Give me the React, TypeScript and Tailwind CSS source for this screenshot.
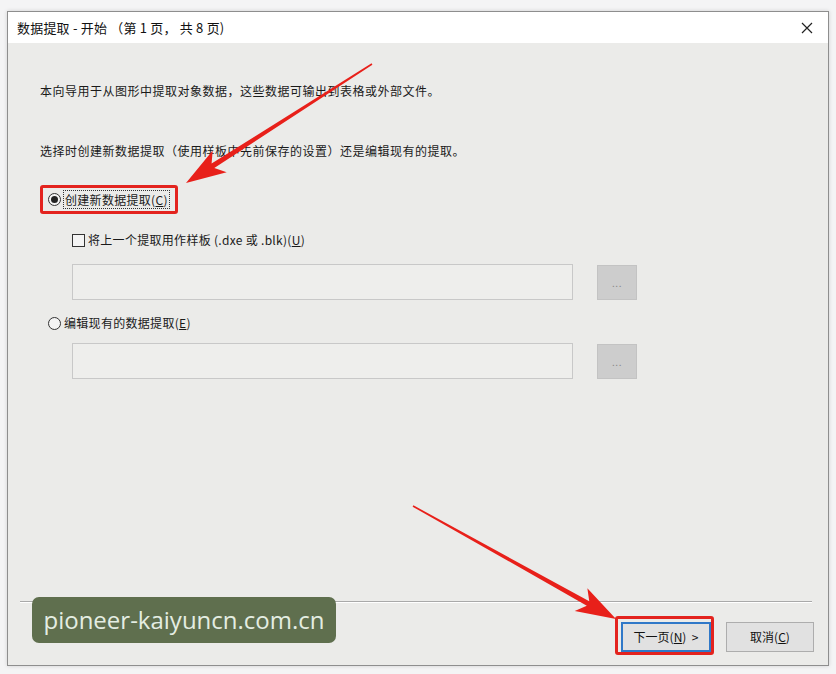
import React from "react";

const cjk = { fontFamily: '"Noto Sans CJK SC", "Microsoft YaHei", sans-serif' };

function Radio({ checked }: { checked?: boolean }) {
  return (
    <span className="w-[13px] h-[13px] rounded-full border border-[#333] bg-[#f4f4f4] flex items-center justify-center shrink-0">
      {checked && <span className="w-[7px] h-[7px] rounded-full bg-[#222]" />}
    </span>
  );
}

function PathRow() {
  return (
    <div className="flex items-start ml-[32px]">
      <div className="w-[501px] h-[36px] border border-[#c8c8c8] bg-[#eeeeec]" />
      <div className="ml-[24px] mt-[1px] w-[40px] h-[35px] bg-[#cdcdcd] border border-[#c3c3c3] flex items-center justify-center text-[10px] text-[#888] leading-none">
        ...
      </div>
    </div>
  );
}

export default function App() {
  return (
    <div className="relative w-[836px] h-[674px] bg-[#f4f4f5] overflow-hidden" style={cjk}>
      <div className="pt-[11px] pl-[7px]">
        <div className="w-[822px] h-[655px] border border-[#8e8e8e] bg-[#ebebe9] flex flex-col shadow-[0_0_4px_rgba(0,0,0,0.15)]">
          {/* Title bar */}
          <div className="h-[31px] bg-white flex items-center justify-between pl-[9px] pr-[10px] shrink-0">
            <span className="text-[13px] text-[#111] tracking-[0.2px]">数据提取 - 开始 （第 1 页， 共 8 页)</span>
            <svg width="12" height="12" viewBox="0 0 12 12" className="mr-[5px]">
              <path d="M1 1 L11 11 M11 1 L1 11" stroke="#222" strokeWidth="1.2" fill="none" />
            </svg>
          </div>

          {/* Content */}
          <div className="flex-1 flex flex-col pl-[32px] text-[12px] leading-[16px] text-[#1a1a1a] tracking-[0.5px]">
            <p className="mt-[40px]">本向导用于从图形中提取对象数据，这些数据可输出到表格或外部文件。</p>
            <p className="mt-[44px]">选择时创建新数据提取（使用样板中先前保存的设置）还是编辑现有的提取。</p>

            <div className="mt-[26px] self-start h-[29px] w-[138px] border-[3px] border-[#e3231e] rounded-[3px] flex items-center pl-[5px] tracking-[0.3px]">
              <Radio checked />
              <span className="ml-[2px] border border-dotted border-[#333] px-[1px] leading-[17px]">
                创建新数据提取(<u>C</u>)
              </span>
            </div>

            <div className="mt-[18px] ml-[32px] flex items-center h-[16px]">
              <span className="w-[13px] h-[13px] border border-[#333] bg-[#f4f4f4] shrink-0" />
              <span className="ml-[3px] tracking-[0.3px]">将上一个提取用作样板 (.dxe 或 .blk)(<u>U</u>)</span>
            </div>

            <div className="mt-[16px]">
              <PathRow />
            </div>

            <div className="mt-[15px] ml-[8px] flex items-center h-[16px]">
              <Radio />
              <span className="ml-[3px] tracking-[0.3px]">编辑现有的数据提取(<u>E</u>)</span>
            </div>

            <div className="mt-[12px]">
              <PathRow />
            </div>
          </div>

          {/* Footer */}
          <div className="shrink-0 flex flex-col">
            <div className="ml-[12px] mr-[16px] h-[2px] border-t border-[#a9a9a9] border-b border-b-white" />
            <div className="flex justify-end gap-[15px] pr-[14px] pt-[19px] pb-[13px] text-[12px] text-[#111]">
              <div className="relative">
                <div className="absolute -left-[6px] -top-[6px] -right-[3px] -bottom-[3px] border-[3px] border-[#e3231e] rounded-[3px]" />
                <div className="relative w-[90px] h-[30px] bg-[#e1e1e1] border-2 border-[#2f78c8] flex items-center justify-center">
                  下一页(<u>N</u>)&nbsp;&nbsp;&gt;
                </div>
              </div>
              <div className="w-[88px] h-[30px] bg-[#e1e1e1] border border-[#adadad] flex items-center justify-center">
                取消(<u>C</u>)
              </div>
            </div>
          </div>
        </div>
      </div>

      {/* Watermark */}
      <div
        className="absolute left-[32px] top-[597px] w-[304px] h-[46px] rounded-[7px] bg-[#5f6f4e] flex items-center justify-center text-[24px] text-[#e4ede2]"
        style={{ fontFamily: '"Open Sans", "Noto Sans", sans-serif' }}
      >
        pioneer-kaiyuncn.com.cn
      </div>

      {/* Annotation arrows */}
      <svg className="absolute left-0 top-0 pointer-events-none" width="836" height="674" viewBox="0 0 836 674">
        <polygon
          fill="#e8201a"
          points="372.4,64.7 214.3,167.9 226.7,172.35 186,183 212.7,150.45 211.6,163.6 371.6,63.3"
        />
        <polygon
          fill="#e8201a"
          points="413.39,505.3 589.26,601.26 587.36,588.18 616,619 574.72,610.9 586.82,605.63 412.61,506.7"
        />
      </svg>
    </div>
  );
}
